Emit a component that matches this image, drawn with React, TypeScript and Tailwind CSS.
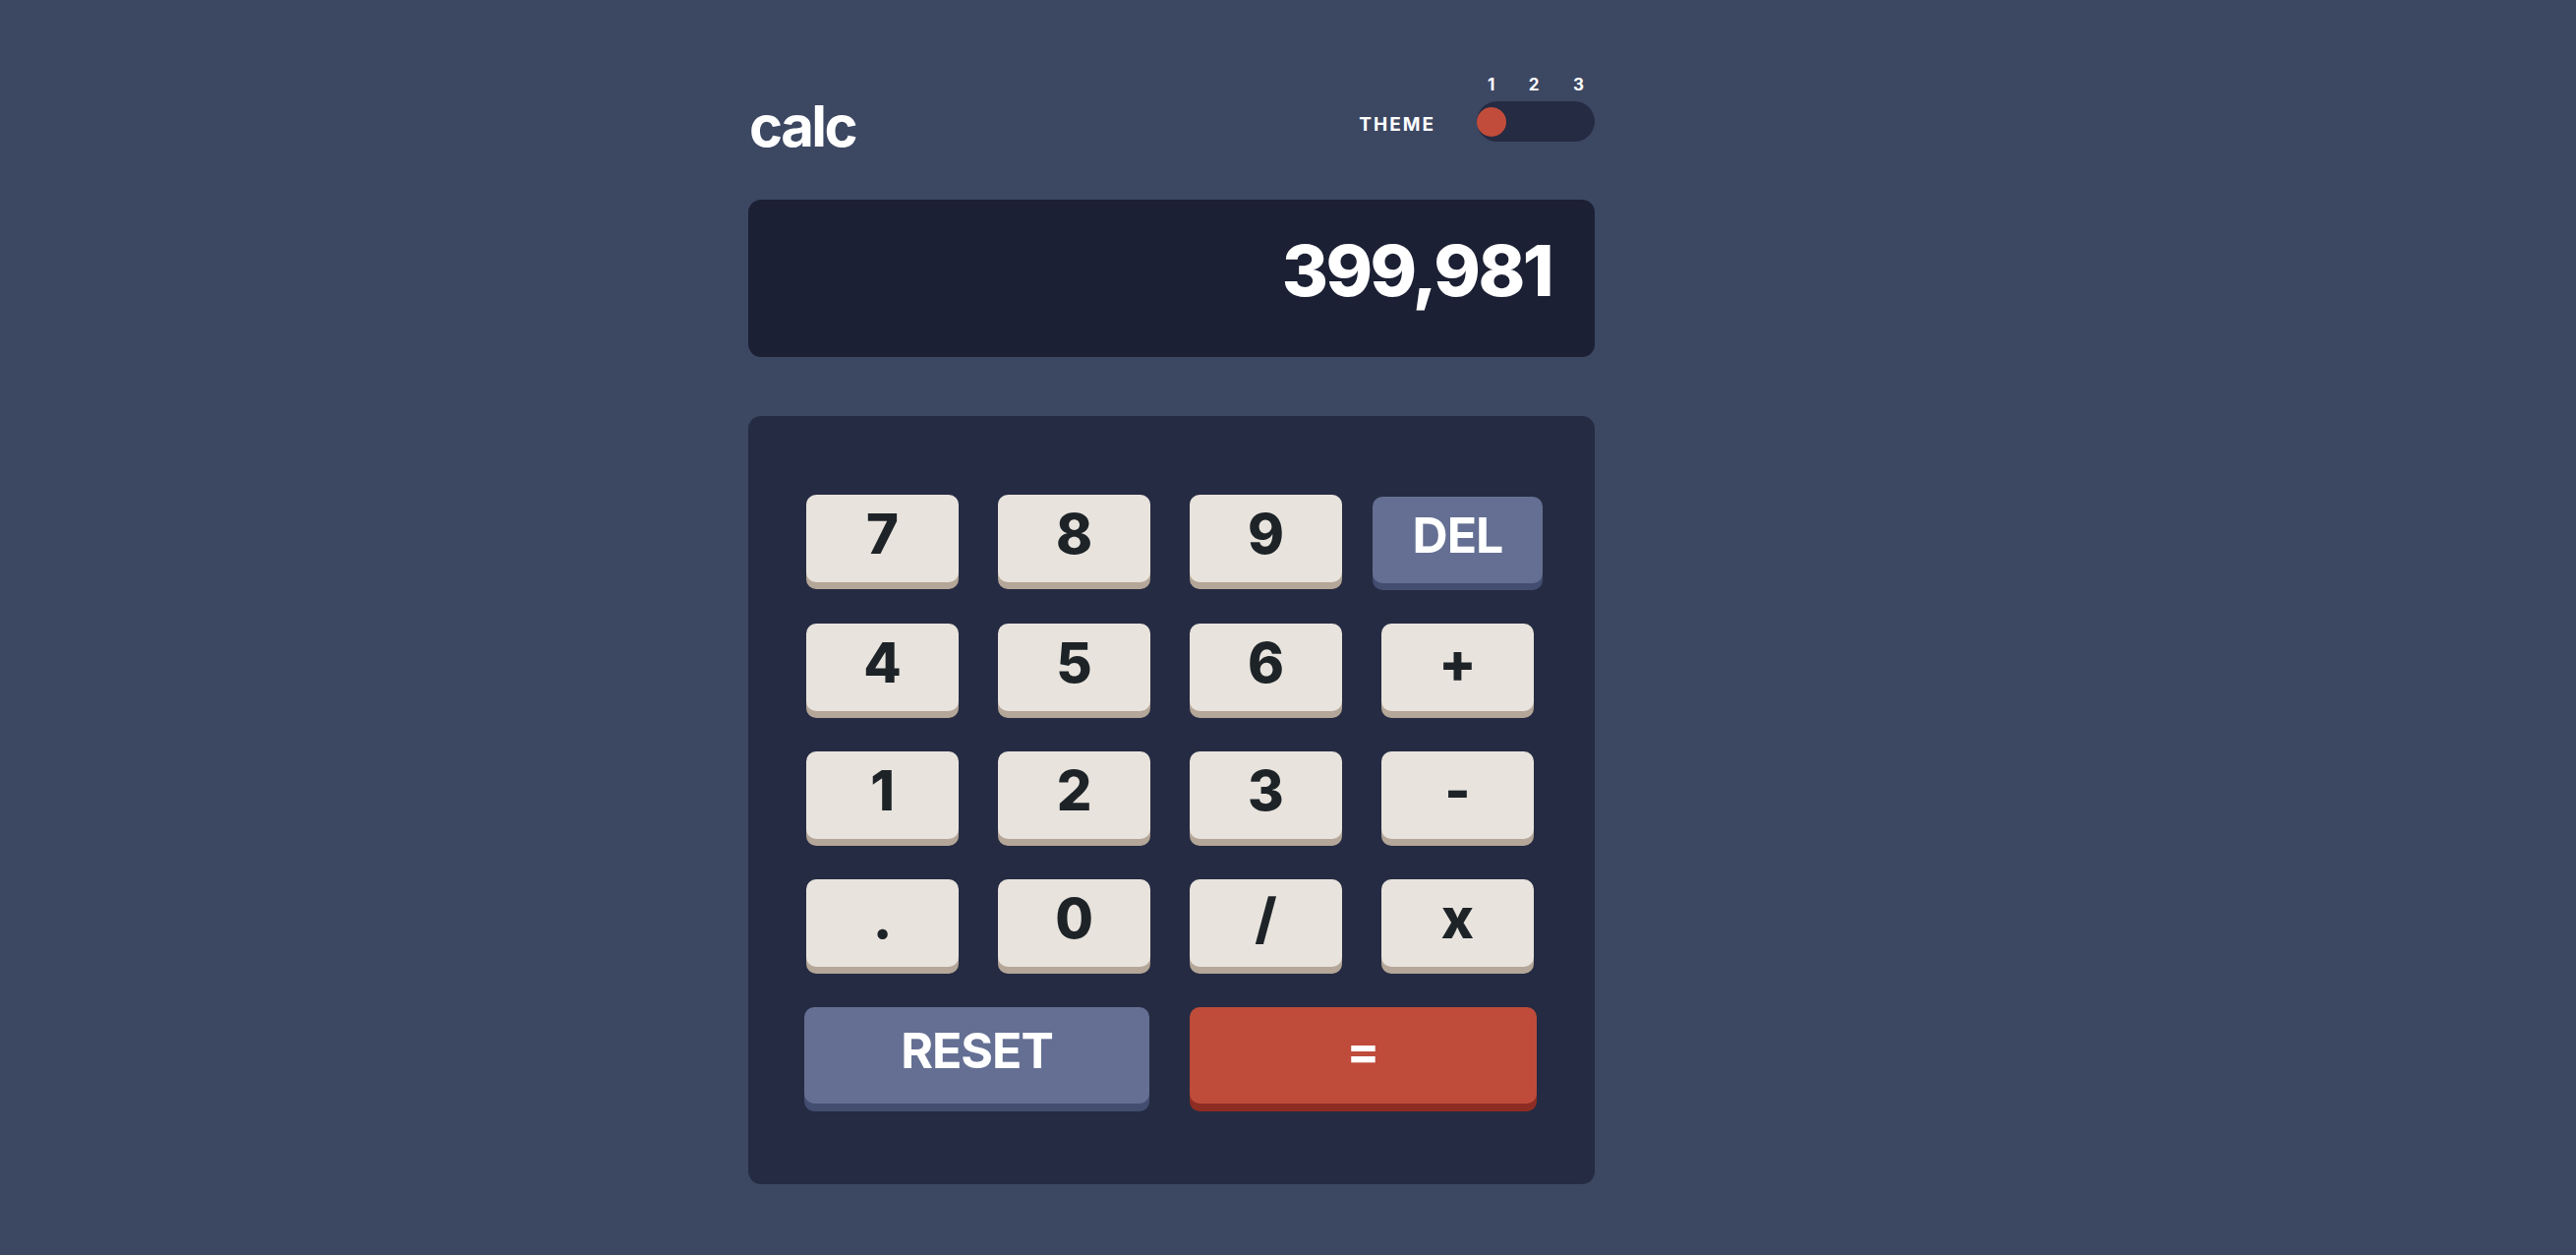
import React, { useState } from 'react';

const font = { fontFamily: 'Inter, "Noto Sans", sans-serif' };

type KeyKind = 'light' | 'blue' | 'red';

interface KeyProps {
    label: string;
    kind?: KeyKind;
    className?: string;
    onPress: (label: string) => void;
}

const Key: React.FC<KeyProps> = ({ label, kind = 'light', className = '', onPress }) => {
    const look =
        kind === 'light'
            ? 'bg-[#e8e3dd] text-[#1d2327] shadow-[0_7px_0_#b4a698] h-[89px] text-[56px] font-extrabold'
            : kind === 'blue'
            ? 'bg-[#646f93] text-white shadow-[0_7px_0_#434d70] h-[88px] text-[50px] tracking-[-1px] font-bold'
            : 'bg-[#bf4b3b] text-white shadow-[0_8px_0_#8d2c22] h-[98px] text-[50px] font-bold';

    return (
        <button
            onClick={() => onPress(label)}
            className={`flex items-center justify-center pb-[10px] rounded-[10px] leading-none cursor-pointer ${look} ${className}`}
        >
            {label}
        </button>
    );
};

export default function App() {
    const [display, setDisplay] = useState('399,981');

    const press = (label: string) => {
        if (label === 'RESET') setDisplay('0');
        else if (label === 'DEL') setDisplay(d => (d.length > 1 ? d.slice(0, -1) : '0'));
        else if (label !== '=') setDisplay(d => (d === '0' ? label : d + label));
    };

    const rows = [
        ['7', '8', '9'],
        ['4', '5', '6', '+'],
        ['1', '2', '3', '-'],
        ['.', '0', '/', 'x'],
    ];

    return (
        <div className="min-h-screen w-full bg-[#3c4762] pl-[761px] pt-[78px]" style={font}>
            <div className="w-[861px]">
                {/* header */}
                <div className="flex justify-between items-start">
                    <h1 className="text-white font-bold text-[58px] leading-none tracking-[-2.5px] mt-[21px] ml-[1px]">calc</h1>
                    <div className="flex items-end gap-[42px]">
                        <span className="text-white font-bold text-[19px] leading-none tracking-[2px] mb-[8px]">THEME</span>
                        <div className="flex flex-col w-[120px]">
                            <div className="flex justify-between px-[11px] text-white font-bold text-[17px] leading-none">
                                <span>1</span>
                                <span>2</span>
                                <span>3</span>
                            </div>
                            <div className="mt-[8px] h-[41px] rounded-full bg-[#252b42] flex items-center">
                                <div className="w-[30px] h-[30px] rounded-full bg-[#c24c3b]"></div>
                            </div>
                        </div>
                    </div>
                </div>

                {/* screen */}
                <div className="mt-[46px] h-[160px] rounded-[13px] bg-[#1c2034] flex items-center justify-end pr-[44px] pb-[16px]">
                    <span className="text-white font-extrabold text-[72px] leading-none tracking-[-2.5px]">{display}</span>
                </div>

                {/* keypad */}
                <div className="mt-[60px] rounded-[13px] bg-[#252b42] pt-[80px] pb-[82px] pl-[59px] pr-[62px]">
                    <div className="grid grid-cols-[repeat(4,155px)] gap-x-[40px] gap-y-[41px]">
                        {rows[0].map(k => (
                            <Key key={k} label={k} onPress={press} />
                        ))}
                        <Key label="DEL" kind="blue" className="-mx-[9px] mt-[2px]" onPress={press} />
                        {rows.slice(1).flat().map(k => (
                            <Key key={k} label={k} onPress={press} />
                        ))}
                        <Key label="RESET" kind="blue" className="col-span-2 h-[98px] shadow-[0_8px_0_#434d70] -ml-[2px] mr-[1px]" onPress={press} />
                        <Key label="=" kind="red" className="col-span-2 -mr-[3px]" onPress={press} />
                    </div>
                </div>
            </div>
        </div>
    );
}
